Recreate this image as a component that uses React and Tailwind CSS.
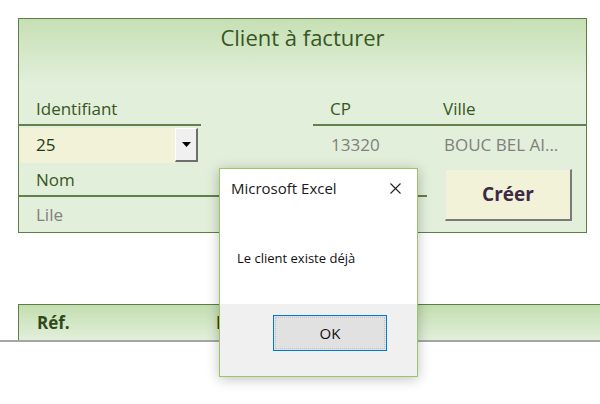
export default function App() {
  return (
    <div className="relative w-[600px] h-[404px] bg-white overflow-hidden" style={{ fontFamily: '"Open Sans", "Noto Sans", sans-serif' }}>
      <div className="pt-[18px] pl-[18px]">
        {/* main form panel */}
        <div className="w-[569px] h-[215px] border border-[#5e7d47] bg-linear-to-b from-[#c6e0b4] to-[#e2efda] to-[30%] flex flex-col">
          <div className="h-[37px] flex items-center justify-center text-[22px] text-[#375623]">Client à facturer</div>
          <div className="h-[37px]" />
          {/* labels */}
          <div className="flex h-[33px] text-[17px] text-[#375623]">
            <div className="w-[182px] border-b-2 border-[#62804a] pl-[17px] flex items-center">Identifiant</div>
            <div className="w-[112px]" />
            <div className="flex-1 border-b-2 border-[#62804a] flex items-center">
              <span className="w-[130px] pl-[17px]">CP</span>
              <span>Ville</span>
            </div>
          </div>
          {/* values */}
          <div className="flex h-[38px] text-[17px] items-center">
            <div className="ml-[1px] w-[155px] h-[35px] bg-[#f2f2d8] pl-[16px] flex items-center text-[#253a14]">25</div>
            <div className="w-[23px] h-[34px] bg-[#f0f0f0] border-t border-l border-white border-r-2 border-b-2 border-r-[#6e6e6e] border-b-[#6e6e6e] flex items-center justify-center">
              <svg width="9" height="5" viewBox="0 0 9 5"><path d="M0 0h9L4.5 5z" fill="#000" /></svg>
            </div>
            <div className="w-[116px]" />
            <div className="flex-1 flex items-center text-[#7f7f7f]">
              <span className="w-[130px] pl-[17px]">13320</span>
              <span>BOUC BEL AI...</span>
            </div>
          </div>
          {/* nom / lile / créer */}
          <div className="flex flex-1">
            <div className="w-[408px] flex flex-col text-[17px]">
              <div className="h-[33px] border-b-2 border-[#62804a] pl-[17px] flex items-center text-[#375623]">Nom</div>
              <div className="flex-1 pl-[17px] flex items-center text-[#808080]">Lile</div>
            </div>
            <div className="ml-[18px] mt-[5px] w-[127px] h-[52px] bg-[#f2f2d9] border-t border-l border-[#e8e8e8] border-r-2 border-b-2 border-r-[#7a7a7a] border-b-[#7a7a7a] flex items-center justify-center text-[19px] font-bold text-[#3d2a45]">
              Créer
            </div>
          </div>
        </div>
      </div>

      {/* second table header */}
      <div className="mt-[71px] h-[38px] border-b-2 border-[#a6a6a6] pl-[18px]">
        <div className="h-full border-t border-l border-[#5e7d47] bg-linear-to-b from-[#c3deb0] to-[#e2efda] flex items-center">
          <span className="w-[197px] pl-[18px] text-[17px] font-bold text-[#2f4a1a]">Réf.</span>
          <span className="text-[17px] font-bold text-[#2f4a1a]">Désignation</span>
        </div>
      </div>

      {/* message box */}
      <div className="absolute left-[219px] top-[168px] w-[199px] h-[209px] border border-[#9cc567] bg-white flex flex-col shadow-[0_2px_12px_rgba(0,0,0,0.25)]">
        <div className="h-[38px] flex items-center justify-between pl-[11px] pr-[16px] text-[15px] text-[#1a1a1a]">
          <span>Microsoft Excel</span>
          <svg width="11" height="11" viewBox="0 0 11 11"><path d="M0.5 0.5l10 10M10.5 0.5l-10 10" stroke="#222" strokeWidth="1.1" /></svg>
        </div>
        <div className="h-[97px] pl-[17px] pt-[42px] text-[13px] text-[#111]">Le client existe déjà</div>
        <div className="flex-1 bg-[#f0f0f0] pt-[11px] pl-[53px]">
          <div className="w-[114px] h-[36px] bg-[#e1e1e1] border border-[#0078d7] flex items-center justify-center text-[15px] text-[#111]">
            <div className="w-[110px] h-[32px] border border-dotted border-[#7a9ec6]/40 flex items-center justify-center">OK</div>
          </div>
        </div>
      </div>
    </div>
  );
}
